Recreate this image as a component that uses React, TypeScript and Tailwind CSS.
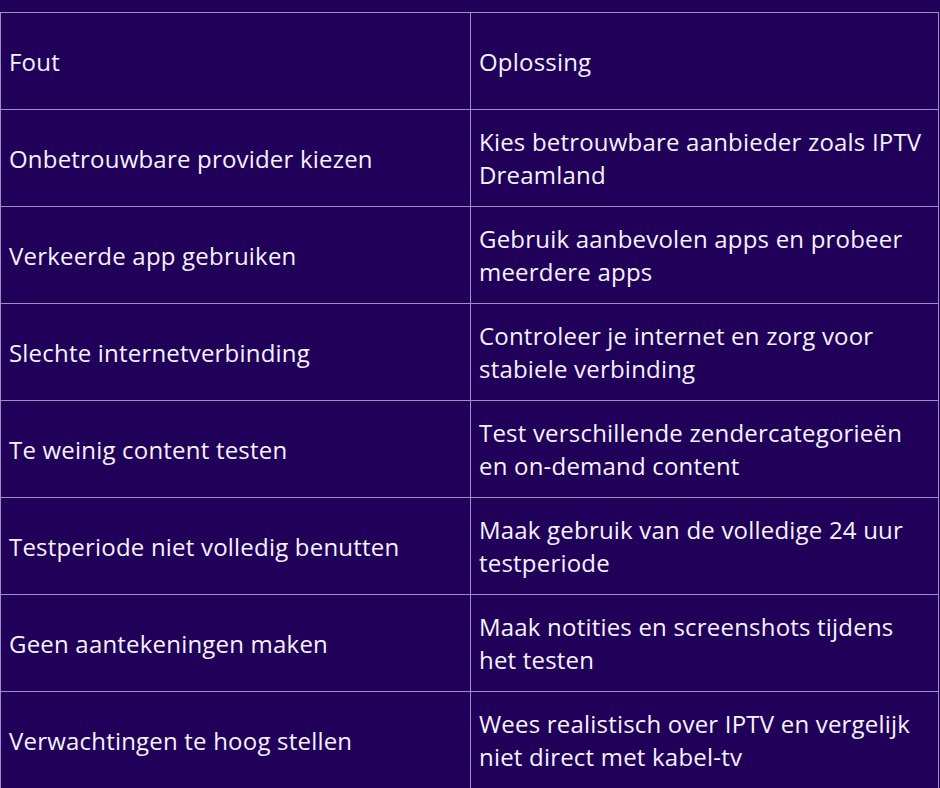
const rows: [string, string][] = [
  ["Fout", "Oplossing"],
  ["Onbetrouwbare provider kiezen", "Kies betrouwbare aanbieder zoals IPTV Dreamland"],
  ["Verkeerde app gebruiken", "Gebruik aanbevolen apps en probeer meerdere apps"],
  ["Slechte internetverbinding", "Controleer je internet en zorg voor stabiele verbinding"],
  ["Te weinig content testen", "Test verschillende zendercategorieën en on-demand content"],
  ["Testperiode niet volledig benutten", "Maak gebruik van de volledige 24 uur testperiode"],
  ["Geen aantekeningen maken", "Maak notities en screenshots tijdens het testen"],
  ["Verwachtingen te hoog stellen", "Wees realistisch over IPTV en vergelijk niet direct met kabel-tv"],
];

export default function App() {
  return (
    <div
      className="w-[940px] h-[788px] overflow-hidden bg-[#21005a] pt-[12px] text-[#f5f2fc]"
      style={{ fontFamily: '"Open Sans", "Noto Sans", sans-serif' }}
    >
      <table className="w-[939px] table-fixed border-collapse">
        <colgroup>
          <col className="w-[470px]" />
          <col />
        </colgroup>
        <tbody>
          {rows.map(([a, b]) => (
            <tr key={a} className="h-[97px]">
              <td className="border-[1.5px] border-[#9a8fc7] pl-[8px] pr-2 align-middle text-[24px] leading-[33px] tracking-[0.2px]">
                {a}
              </td>
              <td className="border-[1.5px] border-[#9a8fc7] pl-[8px] pr-2 align-middle text-[24px] leading-[33px] tracking-[0.2px]">
                {b}
              </td>
            </tr>
          ))}
        </tbody>
      </table>
    </div>
  );
}
